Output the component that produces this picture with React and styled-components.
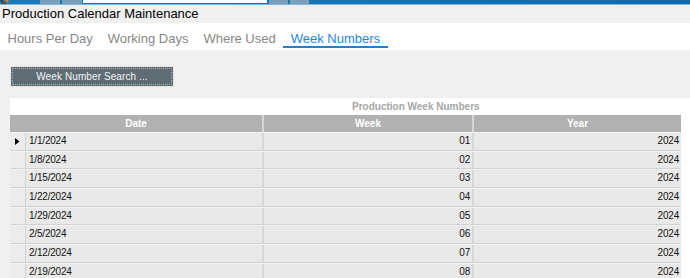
import React from 'react';
import styled, { createGlobalStyle } from 'styled-components';

const GlobalStyle = createGlobalStyle`
  html, body {
    margin: 0;
    padding: 0;
    background: #f0f0f0;
    font-family: "Liberation Sans", Arial, sans-serif;
    overflow: hidden;
  }
`;

// Thin strip of the window above (task bar remnants)
const TopStrip = styled.div`
  display: flex;
  height: 4px;
  background: linear-gradient(to right, #1a7cbc, #0f6aa9);
  border-bottom: 1px solid #7fb7dc;
`;

const StripBlock = styled.div`
  width: ${(p) => p.w}px;
  margin-left: ${(p) => p.gap || 0}px;
  height: ${(p) => (p.white ? 3 : 4)}px;
  background: ${(p) => (p.white ? '#ffffff' : p.grey ? '#7b9fb9' : 'transparent')};
`;

const TitleBar = styled.div`
  height: 18px;
  line-height: 18px;
  padding-left: 2px;
  font-size: 13px;
  color: #000;
`;

const TabStrip = styled.div`
  display: flex;
  align-items: flex-start;
  height: 27px;
  background: #ffffff;
`;

const Tab = styled.div`
  padding: 8px 7.5px 0;
  line-height: 15px;
  font-size: 13px;
  color: ${(p) => (p.active ? '#1f87e0' : '#878787')};
  border-bottom: 2px solid ${(p) => (p.active ? '#1e7fd8' : 'transparent')};
  cursor: pointer;
`;

const Body = styled.div`
  padding: 16px 0 0 10px;
`;

const SearchButton = styled.button`
  display: block;
  box-sizing: border-box;
  width: 164px;
  height: 21px;
  padding: 0;
  background: #5f6c74;
  border: 1px solid #e4e6e8;
  outline: 1px dotted #a9b3b9;
  outline-offset: -3px;
  color: #f2f5f7;
  font-family: "Liberation Sans", Arial, sans-serif;
  font-size: 10px;
  letter-spacing: 0.1px;
  cursor: pointer;
`;

const Panel = styled.div`
  margin-top: 11px;
  background: #ffffff;
  height: 180px;
  overflow: hidden;
`;

const Caption = styled.div`
  height: 17px;
  line-height: 17px;
  padding-left: 342px;
  font-size: 10px;
  font-weight: bold;
  color: #a6a6a6;
`;

const Grid = styled.div`
  width: 671px;
`;

const HeaderRow = styled.div`
  display: grid;
  grid-template-columns: 254px 210px 207px;
  height: 17px;
  background: #b1b1b1;
`;

const HeaderCell = styled.div`
  line-height: 17px;
  text-align: center;
  font-size: 10px;
  font-weight: bold;
  color: #ffffff;
  border-right: ${(p) => (p.last ? 'none' : '2px solid #d6d6d6')};
`;

const Row = styled.div`
  display: grid;
  grid-template-columns: 16px 238px 210px 207px;
  box-sizing: border-box;
  height: 18.67px;
  background: #e9e9e9;
  border-bottom: 1px solid #d3d3d3;
  border-top: 1px solid #f3f3f3;
`;

const Indicator = styled.div`
  display: flex;
  align-items: center;
  padding-left: 5px;
  background: #ececec;
  border-right: 1px solid #d2d2d2;
`;

const Cell = styled.div`
  line-height: 16px;
  font-size: 10px;
  letter-spacing: -0.2px;
  color: #111;
  text-align: ${(p) => (p.right ? 'right' : 'left')};
  padding: 0 ${(p) => (p.right ? p.pr : 0)}px 0 ${(p) => (p.right ? 0 : 3)}px;
  border-right: ${(p) => (p.last ? 'none' : '2px solid #d8d8d8')};
`;

const Cursor = () => (
  <svg width="11" height="4" viewBox="0 0 11 4" style={{ display: 'block' }}>
    <path d="M1 0 L6 4 L3 4 Z" fill="#e9781c" stroke="#3a1d05" strokeWidth="0.8" />
    <path d="M5 0 L9 0 L7 3 Z" fill="#e9781c" />
  </svg>
);

const Triangle = () => (
  <svg width="5" height="7" viewBox="0 0 5 7">
    <path d="M0 0 L4.5 3.5 L0 7 Z" fill="#000" />
  </svg>
);

const weeks = [
  ['1/1/2024', '01'],
  ['1/8/2024', '02'],
  ['1/15/2024', '03'],
  ['1/22/2024', '04'],
  ['1/29/2024', '05'],
  ['2/5/2024', '06'],
  ['2/12/2024', '07'],
  ['2/19/2024', '08'],
];

const tabs = ['Hours Per Day', 'Working Days', 'Where Used', 'Week Numbers'];

export default function App() {
  return (
    <>
      <GlobalStyle />
      <TopStrip>
        <Cursor />
        <StripBlock w={20} gap={29} grey />
        <StripBlock w={20} gap={2} grey />
        <StripBlock w={184} gap={1} white />
        <StripBlock w={19} gap={2} grey />
        <StripBlock w={19} gap={2} grey />
      </TopStrip>
      <TitleBar>Production Calendar Maintenance</TitleBar>
      <TabStrip>
        {tabs.map((t) => (
          <Tab key={t} active={t === 'Week Numbers'}>
            {t}
          </Tab>
        ))}
      </TabStrip>
      <Body>
        <SearchButton>Week Number Search ...</SearchButton>
        <Panel>
          <Caption>Production Week Numbers</Caption>
          <Grid>
            <HeaderRow>
              <HeaderCell>Date</HeaderCell>
              <HeaderCell>Week</HeaderCell>
              <HeaderCell last>Year</HeaderCell>
            </HeaderRow>
            {weeks.map(([date, week], i) => (
              <Row key={date}>
                <Indicator>{i === 0 && <Triangle />}</Indicator>
                <Cell>{date}</Cell>
                <Cell right pr={2}>
                  {week}
                </Cell>
                <Cell right pr={2} last>
                  2024
                </Cell>
              </Row>
            ))}
          </Grid>
        </Panel>
      </Body>
    </>
  );
}
